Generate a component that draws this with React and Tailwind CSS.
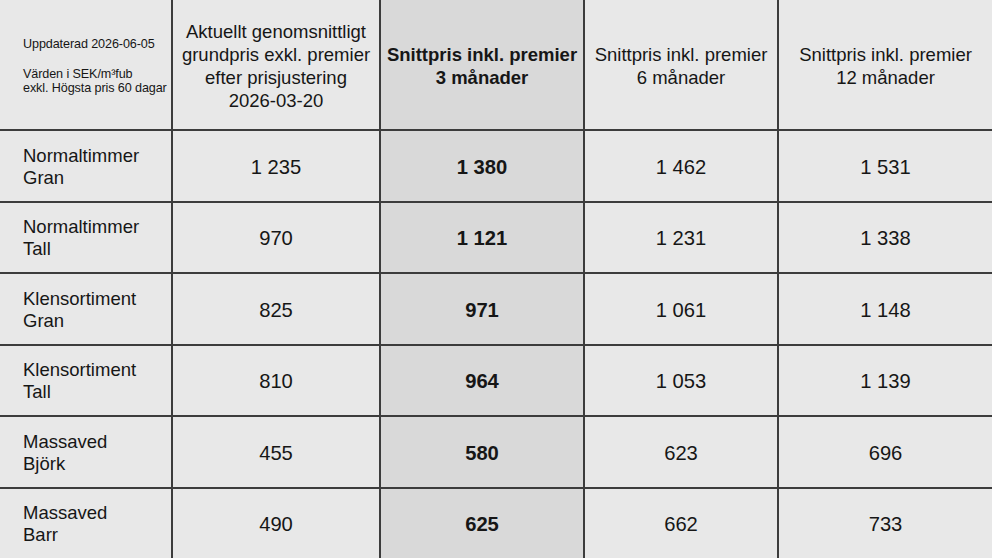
import React from "react";

const rows = [
  ["Normaltimmer", "Gran", "1 235", "1 380", "1 462", "1 531"],
  ["Normaltimmer", "Tall", "970", "1 121", "1 231", "1 338"],
  ["Klensortiment", "Gran", "825", "971", "1 061", "1 148"],
  ["Klensortiment", "Tall", "810", "964", "1 053", "1 139"],
  ["Massaved", "Björk", "455", "580", "623", "696"],
  ["Massaved", "Barr", "490", "625", "662", "733"],
];

export default function App() {
  return (
    <div
      className="w-[992px] h-[558px] overflow-hidden bg-[#3c3c3c] text-[#161616]"
      style={{ fontFamily: '"Liberation Sans", Arial, sans-serif' }}
    >
      <div className="grid h-full grid-cols-[171px_206px_202px_192px_213px] grid-rows-[129px_repeat(6,1fr)] gap-[2px]">
        {/* Rubrikrad */}
        <div className="bg-[#e8e8e8] flex flex-col justify-center pl-[23px] pt-[2px] text-[12.6px] leading-[14px] tracking-[-0.1px]">
          <div>Uppdaterad 2026-06-05</div>
          <div className="mt-[16px]">Värden i SEK/m³fub</div>
          <div>exkl. Högsta pris 60 dagar</div>
        </div>
        <div className="bg-[#e8e8e8] flex items-center justify-center text-center text-[18.5px] leading-[23px] pt-[2px]">
          <div>
            Aktuellt genomsnittligt
            <br />
            grundpris exkl. premier
            <br />
            efter prisjustering
            <br />
            2026-03-20
          </div>
        </div>
        <div className="bg-[#d9d9d9] flex items-center justify-center text-center text-[18.5px] leading-[23px] font-bold pt-[2px]">
          <div>
            Snittpris inkl. premier
            <br />3 månader
          </div>
        </div>
        <div className="bg-[#e8e8e8] flex items-center justify-center text-center text-[18.5px] leading-[23px] pt-[2px]">
          <div>
            Snittpris inkl. premier
            <br />6 månader
          </div>
        </div>
        <div className="bg-[#e8e8e8] flex items-center justify-center text-center text-[18.5px] leading-[23px] pt-[2px]">
          <div>
            Snittpris inkl. premier
            <br />
            12 månader
          </div>
        </div>

        {/* Datarader */}
        {rows.map((r) => (
          <React.Fragment key={r[0] + r[1]}>
            <div className="bg-[#e8e8e8] flex flex-col justify-center pl-[23px] pt-[2px] text-[18.5px] leading-[22px]">
              <div>{r[0]}</div>
              <div>{r[1]}</div>
            </div>
            <div className="bg-[#e8e8e8] flex items-center justify-center pt-[2px] text-[20.2px]">{r[2]}</div>
            <div className="bg-[#d9d9d9] flex items-center justify-center pt-[2px] text-[20.2px] font-bold">{r[3]}</div>
            <div className="bg-[#e8e8e8] flex items-center justify-center pt-[2px] text-[20.2px]">{r[4]}</div>
            <div className="bg-[#e8e8e8] flex items-center justify-center pt-[2px] text-[20.2px]">{r[5]}</div>
          </React.Fragment>
        ))}
      </div>
    </div>
  );
}
